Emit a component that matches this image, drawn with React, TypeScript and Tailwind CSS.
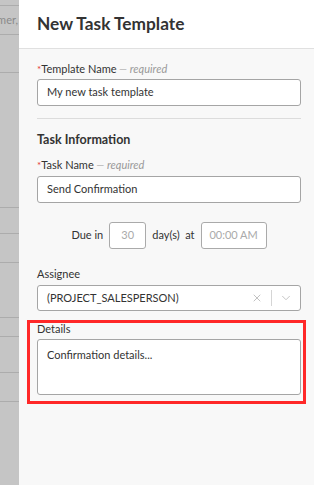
import { X, ChevronDown } from "lucide-react";

const bgRows = [6, 29, 38, 135, 26, 29, 55, 19, 36, 29];

function FieldLabel({ text, required }: { text: string; required?: boolean }) {
  return (
    <div className="text-[11px] leading-4 text-[#333]">
      {required && <span className="text-[10px] text-[#e53935] align-top">*</span>}
      {text}
      {required && <span className="italic text-[#999]"> — required</span>}
    </div>
  );
}

function TextBox({ value }: { value: string }) {
  return (
    <div className="h-[27px] rounded-[3px] border border-[#a5a5a5] bg-white px-[9px] flex items-center text-[11px] text-[#333]">
      {value}
    </div>
  );
}

export default function App() {
  return (
    <div
      className="flex h-[485px] w-[314px] overflow-hidden"
      style={{ fontFamily: "Lato, 'Open Sans', sans-serif" }}
    >
      {/* page behind the drawer */}
      <div className="w-[19px] shrink-0 bg-[#c5c5c5] flex flex-col">
        {bgRows.map((h, i) => (
          <div
            key={i}
            className="border-b border-[#acacac] flex items-center justify-end overflow-hidden"
            style={{ height: h }}
          >
            {i === 1 && <span className="text-[11px] text-[#8a8a8a] whitespace-nowrap pr-[1px]">mer,</span>}
          </div>
        ))}
      </div>

      {/* drawer */}
      <div className="flex-1 bg-[#f8f8f8] flex flex-col">
        <div className="h-[49px] bg-white border-b border-[#e0e0e0] pl-[18px] flex items-center">
          <h1 className="text-[17.3px] font-bold text-[#333]">New Task Template</h1>
        </div>

        <div className="pl-[18px] pr-[13px] pt-[12px] flex flex-col">
          <FieldLabel text="Template Name" required />
          <div className="mt-[2px]">
            <TextBox value="My new task template" />
          </div>

          <div className="mt-[12px] border-t border-[#dcdcdc]" />

          <h2 className="mt-[12px] text-[12.5px] leading-[18px] font-bold text-[#333]">Task Information</h2>

          <div className="mt-[8px]">
            <FieldLabel text="Task Name" required />
          </div>
          <div className="mt-[3px]">
            <TextBox value="Send Confirmation" />
          </div>

          <div className="mt-[19px] flex items-center justify-center text-[11px] text-[#333]">
            <span>Due in</span>
            <div className="ml-[6px] w-[37px] h-[27px] rounded-[3px] border border-[#aaa] bg-white flex items-center justify-center text-[#aaa]">
              30
            </div>
            <span className="ml-[6px]">day(s)&nbsp; at</span>
            <div className="ml-[6px] w-[66px] h-[27px] rounded-[3px] border border-[#aaa] bg-white flex items-center justify-center text-[#aaa]">
              00:00 AM
            </div>
          </div>

          <div className="mt-[17px]">
            <FieldLabel text="Assignee" />
          </div>
          <div className="mt-[3px] h-[26px] rounded-[3px] border border-[#a5a5a5] bg-white flex items-center text-[11px] text-[#333]">
            <span className="pl-[9px] flex-1">(PROJECT_SALESPERSON)</span>
            <X size={12} strokeWidth={2} className="text-[#c2c2c2] mr-[8px]" />
            <div className="w-px h-[16px] bg-[#d5d5d5]" />
            <ChevronDown size={14} strokeWidth={1.6} className="text-[#c2c2c2] mx-[7px]" />
          </div>

          <div className="relative mt-[10px]">
            <FieldLabel text="Details" />
            <div className="mt-[2px] h-[56px] rounded-[3px] border border-[#a5a5a5] bg-white px-[9px] pt-[7px] text-[11px] text-[#333]">
              Confirmation details...
            </div>
            <span className="absolute -left-[10px] -right-[5px] -top-[1px] -bottom-[9px] border-[3px] border-[#ff2828] pointer-events-none" />
          </div>
        </div>
      </div>
    </div>
  );
}
